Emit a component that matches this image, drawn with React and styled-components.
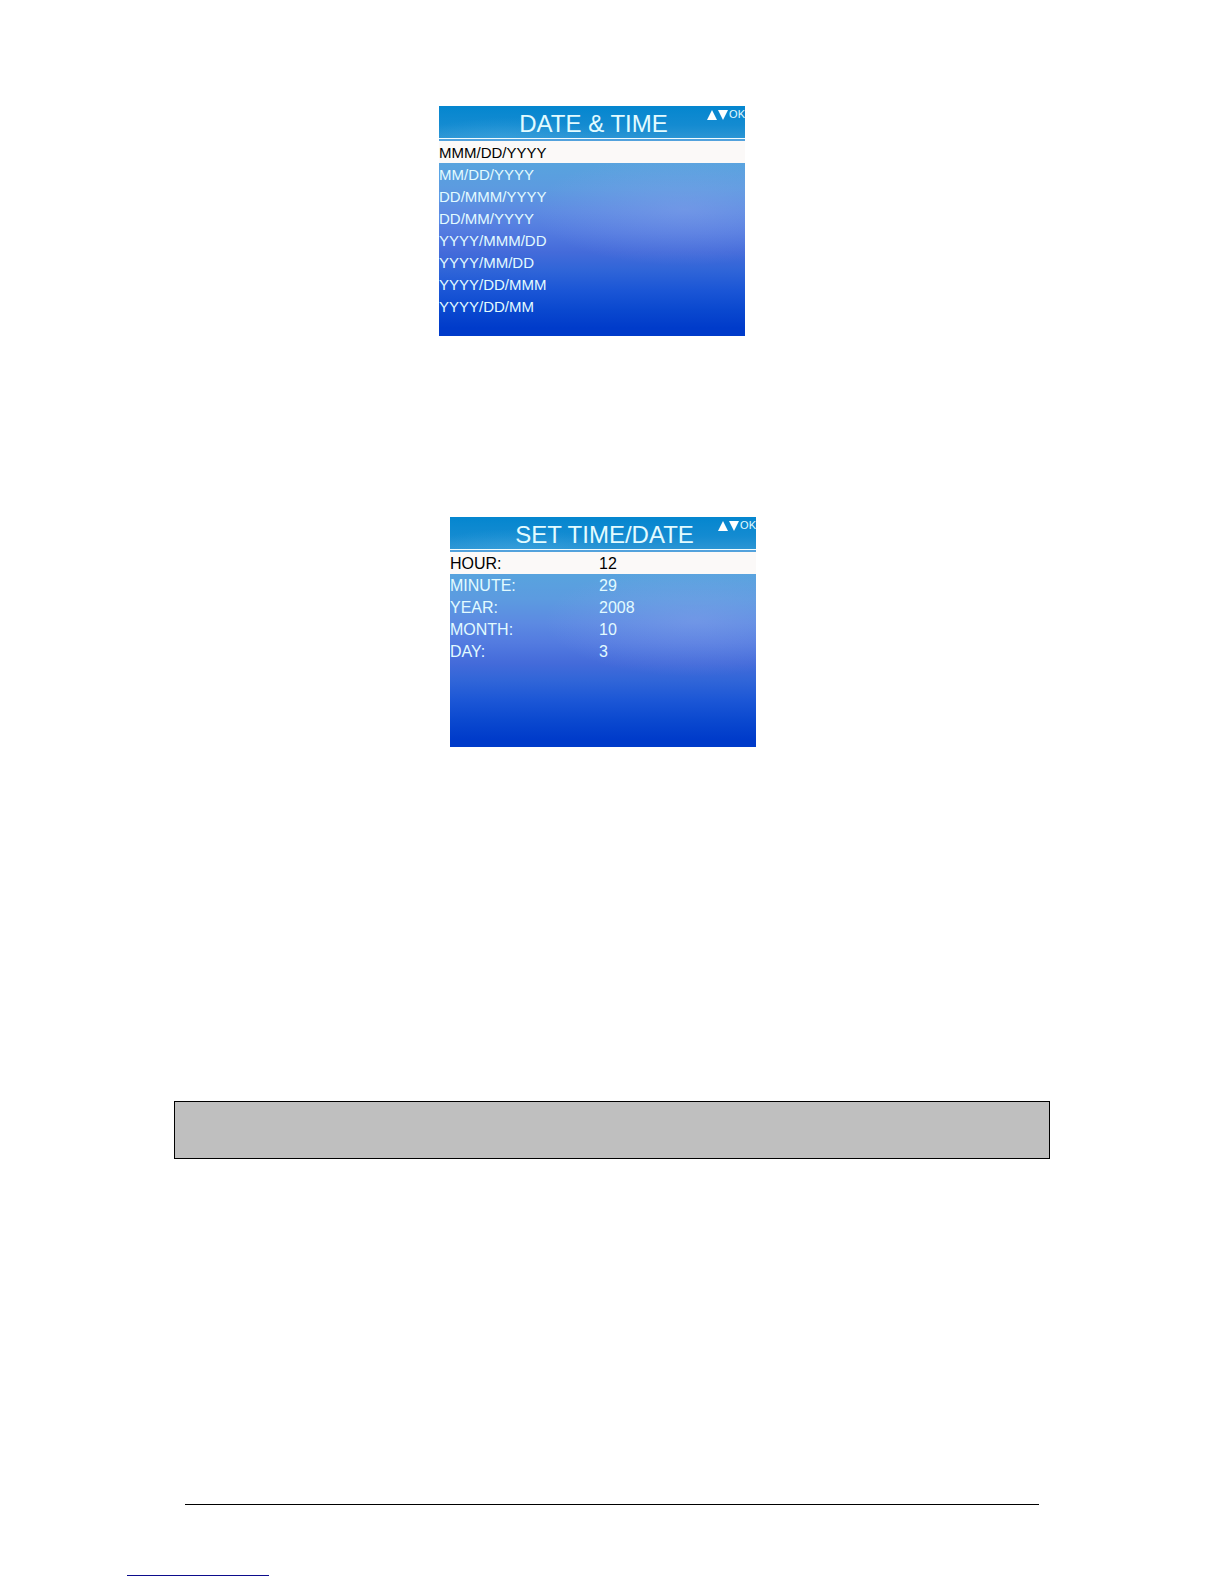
import React from "react";
import styled, { createGlobalStyle } from "styled-components";

const GlobalStyle = createGlobalStyle`
  *, *::before, *::after { box-sizing: border-box; }
  body {
    margin: 0;
    background: #fff;
    font-family: "Liberation Sans", Arial, sans-serif;
  }
`;

const Page = styled.div`
  display: flex;
  flex-direction: column;
  padding: 106px 0 8px;
`;

const Content = styled.main`
  display: flex;
  flex-direction: column;
  align-items: center;
  padding: 0 174px;
`;

const Screen = styled.section`
  width: 306px;
  min-height: 230px;
  margin-right: ${(p) => p.$inset};
  margin-bottom: ${(p) => p.$after};
  color: #e2fbff;
  background:
    radial-gradient(ellipse 150px 56px at 80% 45%, rgba(150, 172, 238, 0.34), rgba(150, 172, 238, 0)),
    linear-gradient(
      to bottom,
      #4aa0da 0,
      #58a3de 58px,
      #5c9be0 82px,
      #5c8ae2 106px,
      #537be0 126px,
      #446bda 146px,
      #3065d8 164px,
      #1b56d6 184px,
      #0a48cf 204px,
      #003bca 222px,
      #003bca 230px
    );
`;

const Header = styled.header`
  display: grid;
  grid-template-columns: 1fr auto 1fr;
  height: 33px;
  border-bottom: 1px solid #f2fcff;
  margin-bottom: 2px;
  background:
    radial-gradient(ellipse 90px 20px at 22% 100%, rgba(70, 170, 226, 0.4), rgba(70, 170, 226, 0)),
    linear-gradient(to bottom, #0486cf, #148bd1 60%, #2b95d4);
`;

const Title = styled.h2`
  grid-column: 2;
  margin: 0;
  padding-left: 3px;
  font-size: 24px;
  font-weight: 400;
  line-height: 35px;
  white-space: nowrap;
`;

const KeyHint = styled.div`
  display: flex;
  justify-content: flex-end;
  gap: 1px;
  padding-top: 2px;
  font-size: 11px;
  line-height: 12px;
`;

const Arrow = styled.svg`
  width: 10px;
  height: 10px;
  margin-top: 2px;
  fill: #fff;
`;

const Options = styled.ul`
  display: flex;
  flex-direction: column;
  margin: 0;
  padding: 0;
  list-style: none;
`;

const Option = styled.button`
  display: block;
  width: 100%;
  height: 22px;
  padding: 2px 0 0;
  border: 0;
  font: 15px/20px "Liberation Sans", Arial, sans-serif;
  text-align: left;
  color: ${(p) => (p.$selected ? "#000" : "inherit")};
  background: ${(p) => (p.$selected ? "#fbf9f8" : "transparent")};
`;

const Settings = styled.dl`
  margin: 0;
`;

const Setting = styled.div`
  display: grid;
  grid-template-columns: 149px 1fr;
  height: 22px;
  padding-top: 2px;
  font-size: 16px;
  line-height: 20px;
  color: ${(p) => (p.$selected ? "#000" : "inherit")};
  background: ${(p) => (p.$selected ? "#fbf9f8" : "transparent")};
`;

const Value = styled.dd`
  margin: 0;
`;

const Banner = styled.div`
  align-self: stretch;
  height: 58px;
  margin-bottom: 345px;
  border: 1px solid #000;
  background: #bfbfbf;
`;

const Rule = styled.hr`
  align-self: stretch;
  height: 1px;
  margin: 0 11px;
  border: 0;
  background: #000;
`;

const Footer = styled.footer`
  padding: 70px 127px 0;
`;

const Underline = styled.hr`
  width: 142px;
  height: 1px;
  margin: 0;
  border: 0;
  background: #0c0c8c;
`;

const formats = [
  "MMM/DD/YYYY",
  "MM/DD/YYYY",
  "DD/MMM/YYYY",
  "DD/MM/YYYY",
  "YYYY/MMM/DD",
  "YYYY/MM/DD",
  "YYYY/DD/MMM",
  "YYYY/DD/MM",
];

const settings = [
  ["HOUR:", "12"],
  ["MINUTE:", "29"],
  ["YEAR:", "2008"],
  ["MONTH:", "10"],
  ["DAY:", "3"],
];

function ScreenHeader({ title }) {
  return (
    <Header>
      <Title>{title}</Title>
      <KeyHint>
        <Arrow viewBox="0 0 10 10" aria-hidden="true">
          <path d="M5 0 10 10H0z" />
        </Arrow>
        <Arrow viewBox="0 0 10 10" aria-hidden="true">
          <path d="M0 0h10L5 10z" />
        </Arrow>
        <span>OK</span>
      </KeyHint>
    </Header>
  );
}

export default function App() {
  return (
    <Page>
      <GlobalStyle />
      <Content>
        <Screen $inset="40px" $after="181px">
          <ScreenHeader title="DATE & TIME" />
          <Options>
            {formats.map((format, i) => (
              <li key={format}>
                <Option type="button" $selected={i === 0}>
                  {format}
                </Option>
              </li>
            ))}
          </Options>
        </Screen>
        <Screen $inset="18px" $after="354px">
          <ScreenHeader title="SET TIME/DATE" />
          <Settings>
            {settings.map(([label, value], i) => (
              <Setting key={label} $selected={i === 0}>
                <dt>{label}</dt>
                <Value>{value}</Value>
              </Setting>
            ))}
          </Settings>
        </Screen>
        <Banner />
        <Rule />
      </Content>
      <Footer>
        <Underline />
      </Footer>
    </Page>
  );
}
